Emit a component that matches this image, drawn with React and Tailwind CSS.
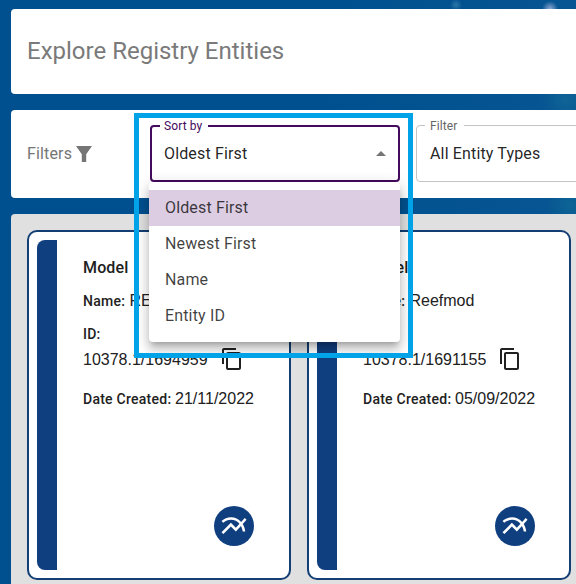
import React from "react";

function Icon({ d, className }) {
  return (
    <svg viewBox="0 0 24 24" fill="currentColor" className={className}>
      <path d={d} />
    </svg>
  );
}

const FILTER = "M4 4h16l-5.8 8.2V20h-4.4v-7.8z";
const COPY =
  "M16 1H4c-1.1 0-2 .9-2 2v14h2V3h12V1zm3 4H8c-1.1 0-2 .9-2 2v14c0 1.1.9 2 2 2h11c1.1 0 2-.9 2-2V7c0-1.1-.9-2-2-2zm0 16H8V7h11v14z";
const CHART =
  "M22 6.92l-1.41-1.41-2.85 3.21C15.68 6.4 12.83 5 9.61 5 6.72 5 4.07 6.16 2 8l1.42 1.42C5.12 7.93 7.27 7 9.61 7c2.74 0 5.09 1.26 6.77 3.24l-2.88 3.24-4-4L2 16.99l1.5 1.5 6-6.01 4 4 4.05-4.55c.75 1.35 1.25 2.9 1.44 4.55H21c-.22-2.3-.95-4.39-2.04-6.14L22 6.92z";

function Value({ children }) {
  return (
    <span className="font-['Liberation_Sans',Arial,sans-serif] text-[16px] font-normal tracking-normal">
      {children}
    </span>
  );
}

function EntityCard({ name, id, date, badge }) {
  return (
    <div className="flex h-[350px] w-[264px] shrink-0 rounded-[10px] border-2 border-[#133f74] bg-white p-2 text-[#212121]">
      <div className="w-5 shrink-0 rounded-l-[8px] bg-[#103f80]" />
      <div className="flex min-w-0 flex-1 flex-col pl-[26px] pt-[16px] text-[14px] font-medium tracking-[0.25px]">
        <h2 className="h-6 text-[16px] leading-6 tracking-[0.15px]">Model</h2>
        <p className="mt-[9px] h-6 whitespace-nowrap leading-6">
          Name: <span className="pl-[0.6px]"><Value>{name}</Value></span>
        </p>
        <p className="mt-[11px] h-5 leading-5">ID:</p>
        <div className="mt-[3px] flex h-6 items-center gap-[12px]">
          <span className="pt-[2px]">
            <Value>{id}</Value>
          </span>
          <Icon d={COPY} className="size-6 shrink-0" />
        </div>
        <p className="mt-[16px] h-6 whitespace-nowrap leading-6">
          Date Created: <Value>{date}</Value>
        </p>
        <div className={`mt-auto mb-[24px] flex size-10 items-center justify-center self-end rounded-full bg-[#103f80] text-white ${badge}`}>
          <Icon d={CHART} className="size-[30px]" />
        </div>
      </div>
    </div>
  );
}

function SelectField({ label, value, open, className }) {
  return (
    <fieldset
      className={`relative -top-[3px] -mt-[1px] h-[62px] shrink-0 rounded-[4px] ${
        open ? "w-[250px] border-2 border-[#430a5d]" : "w-[240px] border border-[#c4c4c4]"
      } ${className}`}
    >
      <legend
        className={`ml-[8px] flex h-[12px] items-center whitespace-nowrap text-[12px] leading-[12px] tracking-[0.11px] ${
          open ? "w-[48px] pl-[4px] text-[#430a5d]" : "w-[39px] pl-[5px] text-[#666]"
        }`}
      >
        {label}
      </legend>
      <div className={`flex h-[45px] items-center justify-between text-[16px] tracking-[0.15px] text-black/87 ${open ? "pl-3 pr-[5px]" : "pl-[13px]"}`}>
        <span>{value}</span>
        {open && <Icon d="m7 14 5-5 5 5z" className="size-6 text-[#757575]" />}
      </div>
    </fieldset>
  );
}

export default function App() {
  const options = ["Oldest First", "Newest First", "Name", "Entity ID"];
  return (
    <div className="relative h-[584px] w-[576px] overflow-hidden bg-[radial-gradient(circle_at_570px_205px,#0c6494_0,transparent_24px),radial-gradient(circle_at_566px_100px,#0f6496_0,transparent_24px),radial-gradient(circle_at_550px_9px,#8fa8d4_0,transparent_8px),radial-gradient(circle_at_456px_5px,#2b76a8_0,transparent_6px),linear-gradient(100deg,#005090_0%,#00508f_50%,#0a5794_100%)] pl-[11px] pt-[9px] font-['Roboto',sans-serif] text-[16px]">
      <header className="flex h-[85px] items-center rounded-l-[4px] bg-white pb-[2px] pl-4">
        <h1 className="text-[24px] leading-8 text-[#7a7a7a]">Explore Registry Entities</h1>
      </header>

      <section className="mt-4 flex h-[88px] items-center rounded-l-[4px] bg-white pl-4">
        <div className="flex w-[123px] shrink-0 items-center tracking-[0.15px] text-[#757575]">
          <span className="w-[45px]">Filters</span>
          <Icon d={FILTER} className="size-6 shrink-0" />
        </div>
        <SelectField label="Sort by" value="Oldest First" open className="" />
        <SelectField label="Filter" value="All Entity Types" className="ml-4" />
      </section>

      <main className="mt-4 flex h-[370px] gap-4 rounded-tl-[4px] bg-[#e0e0e0] pl-4 pt-4">
        <EntityCard name="RE" id="10378.1/1694959" date="21/11/2022" badge="mr-[27px]" />
        <EntityCard name="Reefmod" id="10378.1/1691155" date="05/09/2022" badge="mr-[26px]" />
      </main>

      <ul className="absolute left-[149px] top-[182px] h-[160px] w-[251px] rounded-[4px] bg-white py-2 tracking-[0.15px] text-black/75 shadow-[0_5px_5px_-3px_rgba(0,0,0,0.2),0_8px_10px_1px_rgba(0,0,0,0.14),0_3px_14px_2px_rgba(0,0,0,0.12)]">
        {options.map((o, i) => (
          <li key={o} className={`flex h-9 items-center pl-4 ${i === 0 ? "bg-[#dccde3]" : ""}`}>
            {o}
          </li>
        ))}
      </ul>
      <div className="absolute left-[134px] top-[113px] h-[245px] w-[279px] border-[5px] border-[#00a2e8]" />
    </div>
  );
}
